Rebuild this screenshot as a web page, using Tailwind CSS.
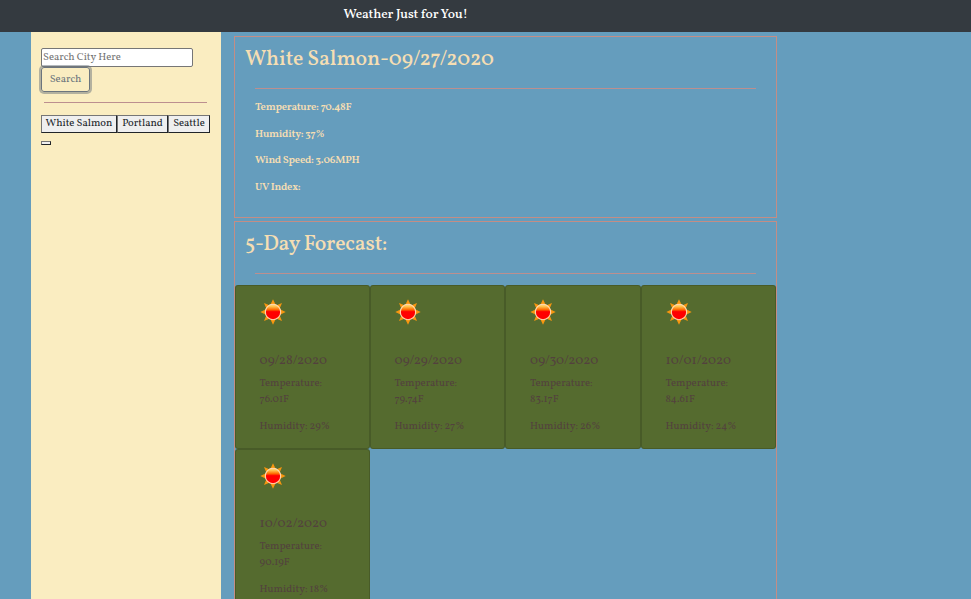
<!DOCTYPE html>
<html lang="en">
<head>
<meta charset="utf-8">
<title>Weather Just for You!</title>
<script src="https://cdn.jsdelivr.net/npm/@tailwindcss/browser@4"></script>
</head>
<body class="h-[599px] overflow-hidden bg-[#659dbd] font-['Vollkorn','Liberation_Serif',serif] text-[10.67px] leading-4 text-[#212529]">
<svg class="absolute size-0">
  <defs>
    <linearGradient id="core" x1="0" y1="0" x2="0" y2="1">
      <stop offset="0" stop-color="#ffe08a"/><stop offset=".15" stop-color="#ffc04a"/><stop offset=".35" stop-color="#ff6a00"/><stop offset=".48" stop-color="#ff0000"/><stop offset="1" stop-color="#ff0000"/>
    </linearGradient>
    <symbol id="sun" viewBox="0 0 26 26">
      <path fill="#f7960f" d="M13 .3 16 6.500 22 4 19.500 10 25.700 13 19.500 16 22 22 16 19.500 13 25.700 10 19.500 4 22 6.500 16 .3 13 6.500 10 4 4 10 6.500Z"/>
      <circle cx="13" cy="13" r="7.700" fill="url(#core)" stroke="#ffd9b0" stroke-width="1.100"/>
    </symbol>
  </defs>
</svg>
<header class="flex h-8 bg-[#343a40] pl-[343.5px] pt-[4px]">
  <h1 class="whitespace-nowrap text-[13.33px] font-medium leading-[22px] tracking-[-0.1px] text-white">Weather Just for You!</h1>
</header>
<main class="flex h-[567px] pl-[31px]">
  <aside class="w-[190px] shrink-0 bg-[#faedc1] px-[10px] pt-4">
    <input class="block h-[19px] w-[152px] rounded-[2px] border border-[#767676] bg-white px-[1px] text-[10.67px] placeholder:text-[#757575]" placeholder="Search City Here">
    <button class="block h-[25px] w-[49px] rounded-[3px] border border-[#6c757d] text-center text-[10.67px] text-[#6c757d] shadow-[0_0_0_2px_#6c757d80]">Search</button>
    <hr class="ml-[3px] mt-[10px] w-[163px] border-[#bc8f8f]">
    <div class="mt-3 flex h-[18px] w-[169px]">
      <button class="w-[76px] whitespace-nowrap border border-[#212529] border-l-[#767676] border-t-[#767676] bg-[#efefef] text-[10.67px] leading-4">White Salmon</button>
      <button class="w-[51px] border border-[#212529] border-l-[#767676] border-t-[#767676] bg-[#efefef] text-[10.67px] leading-4">Portland</button>
      <button class="w-[42px] border border-[#212529] border-l-[#767676] border-t-[#767676] bg-[#efefef] text-[10.67px] leading-4">Seattle</button>
    </div>
    <button class="mt-2 block h-1 w-[10px] border border-[#212529] border-l-[#767676] border-t-[#767676] bg-[#efefef]"></button>
  </aside>
  <div class="ml-[13px] w-[543px] shrink-0 pt-1">
    <section class="h-[182px] border border-[#c48d85] pl-[10px] text-[#f5deb3]">
      <h2 class="mt-[9px] whitespace-nowrap text-[21.33px] font-medium leading-7 tracking-[-0.12px]">White Salmon-09/27/2020</h2>
      <hr class="ml-[10px] mt-[14px] w-[501px] border-[#bc8f8f]">
      <div class="ml-[10px] mt-[11px] flex flex-col gap-[10.67px] font-semibold tracking-[-0.22px]">
        <p>Temperature: 70.48F</p>
        <p>Humidity: 37%</p>
        <p>Wind Speed: 3.06MPH</p>
        <p>UV Index:</p>
      </div>
    </section>
    <section class="mt-[3px] h-[378px] border border-b-0 border-[#c48d85]">
      <h2 class="ml-[10px] mt-[9px] text-[21.33px] font-medium leading-7 tracking-[-0.18px] text-[#f5deb3]">5-Day Forecast:</h2>
      <hr class="ml-5 mt-[14px] w-[501px] border-[#bc8f8f]">
      <div class="mt-[11px] grid h-[314px] grid-cols-[135px_135px_136px_135px] content-start overflow-hidden text-[#53413e]">
        <article class="mb-[-0.5px] h-[164px] rounded-[3px] border border-black/15 bg-[#556b2f] pl-[23.5px] pt-[13px]">
          <svg class="size-[26px]"><use href="#sun"/></svg>
          <h3 class="mt-[28px] text-[13.33px] leading-4">09/28/2020</h3>
          <p class="mt-[7px] w-20">Temperature: 76.01F</p><p class="mt-[11px]">Humidity: 29%</p>
        </article>
        <article class="mb-[-0.5px] h-[164px] rounded-[3px] border border-black/15 bg-[#556b2f] pl-[23.5px] pt-[13px]">
          <svg class="size-[26px]"><use href="#sun"/></svg>
          <h3 class="mt-[28px] text-[13.33px] leading-4">09/29/2020</h3>
          <p class="mt-[7px] w-20">Temperature: 79.74F</p><p class="mt-[11px]">Humidity: 27%</p>
        </article>
        <article class="mb-[-0.5px] h-[164px] rounded-[3px] border border-black/15 bg-[#556b2f] pl-6 pt-[13px]">
          <svg class="size-[26px]"><use href="#sun"/></svg>
          <h3 class="mt-[28px] text-[13.33px] leading-4">09/30/2020</h3>
          <p class="mt-[7px] w-20">Temperature: 83.17F</p><p class="mt-[11px]">Humidity: 26%</p>
        </article>
        <article class="mb-[-0.5px] h-[164px] rounded-[3px] border border-black/15 bg-[#556b2f] pl-[23.5px] pt-[13px]">
          <svg class="size-[26px]"><use href="#sun"/></svg>
          <h3 class="mt-[28px] text-[13.33px] leading-4">10/01/2020</h3>
          <p class="mt-[7px] w-20">Temperature: 84.61F</p><p class="mt-[11px]">Humidity: 24%</p>
        </article>
        <article class="h-[164px] rounded-[3px] border border-black/15 bg-[#556b2f] pl-[23.5px] pt-[13px]">
          <svg class="size-[26px]"><use href="#sun"/></svg>
          <h3 class="mt-[27px] text-[13.33px] leading-4">10/02/2020</h3>
          <p class="mt-[7px] w-20">Temperature: 90.19F</p><p class="mt-[11px]">Humidity: 18%</p>
        </article>
      </div>
    </section>
  </div>
</main>
</body>
</html>
